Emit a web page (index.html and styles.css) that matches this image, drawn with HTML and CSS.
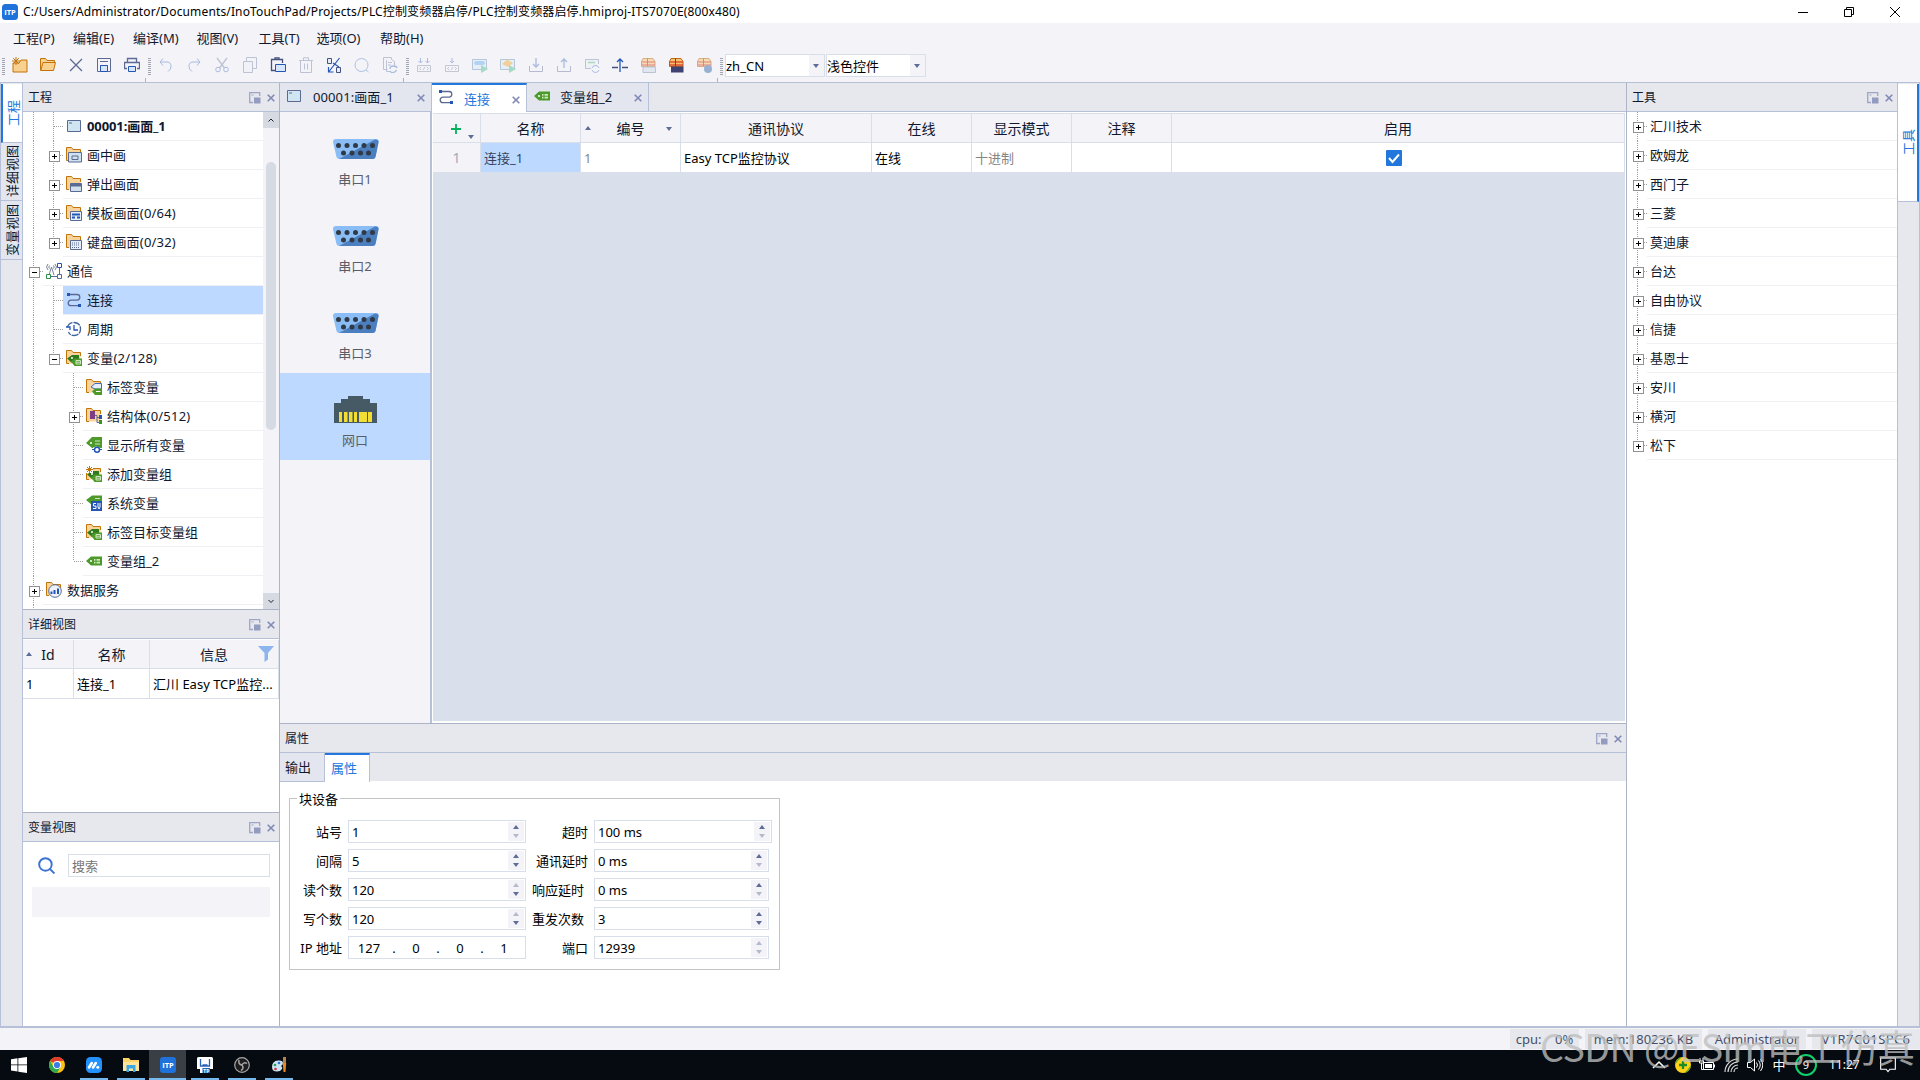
FILE: index.html
```html
<!DOCTYPE html>
<html lang="zh-CN">
<head>
  <meta charset="UTF-8">
  <title>InoTouchPad</title>
  <link rel="stylesheet" href="styles.css">
</head>

<body>
  <!-- Shared icons -->
  <svg class="defs">
    <symbol id="i-screen" viewBox="0 0 16 16"><path d="M1.5 2.5h13v11h-13z" fill="#cfe6f2" stroke="#5b6a92"/><path d="M3 5h3" stroke="#5b6a92"/></symbol>
    <symbol id="i-folder" viewBox="0 0 16 16"><path d="M.5 13.5v-13h5l1.5 2h7.500v11z" fill="#f8d39b"/><path d="M3 13.500H.5v-13h5l1.500 2h7.500V6" fill="none" stroke="#c27408"/></symbol>
    <symbol id="i-tag" viewBox="0 0 16 16"><path d="M0 8l5-4.500h11v9H5z" fill="#4d9a2a"/><path d="M8 6h6v4.500H8z" fill="#cfe8bf"/><path d="M8 8.200h6M10 6v5" stroke="#4d9a2a"/><circle cx="5" cy="8" r="1" fill="#fff"/></symbol>
    <symbol id="i-link" viewBox="0 0 16 16"><path d="M3 2.500h8a2.800 2.800 0 0 1 0 5.600H5a2.800 2.800 0 0 0 0 5.600h8" fill="none" stroke="#5b6a92" stroke-width="1.300"/><path d="M1 1h3v3H1zM12 12h3v3h-3z" fill="#2456b5"/></symbol>
    <symbol id="i-dock" viewBox="0 0 12 12"><path d="M4 10.500H.7V.7h10V4" fill="none" stroke="#8d95bb" stroke-width="1.300"/><path d="M2.500 3h2" stroke="#8d95bb"/><path d="M5 5.500h6.500v6H5z" fill="#7f88b5"/></symbol>
    <symbol id="i-x" viewBox="0 0 8 8"><path d="M.7.7l6.600 6.600M7.300.7L.7 7.300" fill="none" stroke="#8089b5" stroke-width="1.600"/></symbol>
    <symbol id="i-tags2" viewBox="0 0 16 16"><use href="#i-folder"/><path d="M1 8.500L6 5h7v5H9v3H6z" fill="#2f7a1c"/><path d="M5 11.500L8.500 8.500H16V16H8.500z" fill="#4d9a2a"/><path d="M10 10.500h4.500v3.500H10zM10 12.200h4.500" fill="none" stroke="#cfe8bf"/><circle cx="6" cy="8" r="1" fill="#fff"/></symbol>
    <symbol id="i-serial" viewBox="0 0 46 20"><path d="M3 0h40q3 0 2.500 3l-3 15q-.5 2-3 2H6.500q-2.500 0-3-2L0 3Q0 0 3 0z" fill="#8abcf5"/><path d="M42 .5q4 0 3.500 3l-3 14.500q-.5 2-3 2H6z" fill="#4c7fc0"/><g fill="#2f3a44"><circle cx="5.500" cy="6.500" r="2.500"/><circle cx="14" cy="6.500" r="2.500"/><circle cx="22.500" cy="6.500" r="2.500"/><circle cx="31" cy="6.500" r="2.500"/><circle cx="39.500" cy="6.500" r="2.500"/><circle cx="10.500" cy="14" r="2.500"/><circle cx="19" cy="14" r="2.500"/><circle cx="27.500" cy="14" r="2.500"/><circle cx="35.500" cy="14" r="2.500"/></g></symbol>
    <symbol id="i-box" viewBox="0 0 16 16"><path d="M1.500 4.500l1.500-3h10l2 3v5h-13.500z" fill="#f6c46c" stroke="#c0691a"/><path d="M1.500 5h13.500M1.500 8h13.500M7.500 1.500V9" stroke="#d11515"/></symbol>
    <symbol id="i-code" viewBox="0 0 16 16"><path d="M1.500 8.500h13v6h-13z" fill="none" stroke="#6d7890"/><path d="M5 10l-1.500 1.500L5 13M11 10l1.500 1.500L11 13M9 10l-2 3" fill="none" stroke="#6d7890"/></symbol>
  </svg>

  <div class="app">
    <header class="titlebar">
      <svg class="logo" viewBox="0 0 16 16"><rect width="16" height="16" rx="3.500" fill="#1f72da"/><text x="8" y="10.800" text-anchor="middle">ITP</text></svg>
      <span class="path">C:/Users/Administrator/Documents/InoTouchPad/Projects/PLC控制变频器启停/PLC控制变频器启停.hmiproj-ITS7070E(800x480)</span>
      <div class="windowButtons">
        <svg viewBox="0 0 12 12"><path d="M1 6.500h10"/></svg>
        <svg viewBox="0 0 12 12"><path d="M1.500 3.500h7v7h-7zM3.500 3.500v-2h7v7h-2"/></svg>
        <svg viewBox="0 0 12 12"><path d="M1 1l10 10M11 1L1 11"/></svg>
      </div>
    </header>

    <nav class="menubar">
      <span>工程(P)</span><span>编辑(E)</span><span>编译(M)</span><span>视图(V)</span><span>工具(T)</span><span>选项(O)</span><span>帮助(H)</span>
    </nav>

    <div class="toolbar">
      <i class="grip"></i>
      <div class="tools">
        <svg viewBox="0 0 16 16"><path d="M1 15V6h6l2-3h6v12z" fill="#f8d08f" stroke="#c27408"/><path d="M4 0v8M0 4h8M1.200 1.200l5.600 5.600M6.800 1.200L1.200 6.800" stroke="#c27408"/></svg>
        <svg viewBox="0 0 16 16"><path d="M.5 13.500v-12h5l1.500 2h7.500v2" fill="#f8d08f" stroke="#c27408"/><path d="M.8 13.500L3 5.500h12.500l-2 8z" fill="#f8d08f" stroke="#c27408"/></svg>
        <svg viewBox="0 0 16 16"><path d="M2 2l12 12M14 2L2 14" stroke="#5b6a92" stroke-width="1.300"/></svg>
        <svg viewBox="0 0 16 16"><path d="M1.500 1.500h13v13h-13zM4.500 14.500v-6h7v6M4 4.500h8" fill="none" stroke="#5b6a92"/><path d="M4.500 14.500v-6h7v6z" fill="#d8e6fb" stroke="#2456b5"/></svg>
        <svg viewBox="0 0 16 16"><path d="M3.500 5V1.500h9V5M3 11.500H.5v-6h15v6H13" fill="none" stroke="#5b6a92" stroke-width="1.300"/><path d="M4.500 9.500h7v5h-7z" fill="#d8e6fb" stroke="#2456b5"/></svg>
      </div>
      <i class="grip tick"></i>
      <div class="tools">
        <svg class="off" viewBox="0 0 16 16"><path d="M5 1.500L2 5l3 3.500M2 5h7q4 0 4 4.500 0 3-3 5" fill="none" stroke="#2456b5"/></svg>
        <svg class="off" viewBox="0 0 16 16"><path d="M11 1.500L14 5l-3 3.500M14 5H7Q3 5 3 9.500q0 3 3 5" fill="none" stroke="#2456b5"/></svg>
        <svg class="off" viewBox="0 0 16 16"><path d="M3 1l7.500 10M13 1L5.500 11" stroke="#5b6a92" stroke-width="1.300"/><circle cx="4" cy="12.500" r="2.300" fill="none" stroke="#2456b5"/><circle cx="12" cy="12.500" r="2.300" fill="none" stroke="#2456b5"/></svg>
        <svg class="off" viewBox="0 0 16 16"><path d="M1.500 4.500h9v11h-9z" fill="#eef2fa" stroke="#5b6a92"/><path d="M4.500 4V.5h10v11h-4" fill="none" stroke="#5b6a92"/></svg>
        <svg viewBox="0 0 16 16"><path d="M5 13.500H1.500v-11h11V6M5 3V.8h4V3" fill="none" stroke="#44527c" stroke-width="1.300"/><path d="M5.500 7.500h10v7h-10z" fill="#d8e6fb" stroke="#2456b5"/></svg>
        <svg class="off" viewBox="0 0 16 16"><path d="M2.500 3.500v12h11v-12M1 3.500h14M5.500 3V.8h5V3M6.500 6.500v6M9.500 6.500v6" fill="none" stroke="#5b6a92"/></svg>
        <svg viewBox="0 0 16 16"><path d="M1.500 1.500h4v5h-4zM10.500 10.500h4v5h-4z" fill="#e5ebf5" stroke="#44527c"/><path d="M13.500 1L3 14.500M2.500 10v5h5M7 6l6 4" fill="none" stroke="#2456b5" stroke-width="1.200"/></svg>
        <svg class="off" viewBox="0 0 16 16"><circle cx="7.500" cy="8" r="6.500" fill="none" stroke="#2f65c0"/><path d="M12 13l2.500 2" stroke="#2f65c0"/></svg>
        <svg class="off" viewBox="0 0 16 16"><path d="M1.500.5h8v2l3 2v4M1.500.5v12h4M4.500 3v11.500h4M6 5.500h4M6 8h3" fill="none" stroke="#5b6a92"/><path d="M8 12q0-3 3.500-3 3 0 3.500 2M8 14q1 2 3.500 1.500 2-.5 3-2.500" fill="none" stroke="#2456b5" stroke-width="1.300"/></svg>
      </div>
      <i class="grip tick"></i>
      <div class="tools">
        <svg class="off" viewBox="0 0 16 16"><use href="#i-code"/><path d="M4.500 1v5M11.500 1v5M2.500 4l2 2 2-2M9.500 4l2 2 2-2" fill="none" stroke="#2456b5"/></svg>
        <svg class="off" viewBox="0 0 16 16"><use href="#i-code"/><path d="M8 1v5M6 4l2 2 2-2" fill="none" stroke="#2456b5"/></svg>
        <svg class="half" viewBox="0 0 16 16"><path d="M.5 2.500h14v10H.5z" fill="#dcecf6" stroke="#7a9cc4"/><path d="M2 6q0-2 2.500-2h6Q13 4 13 6t-2.500 2h-6Q2 8 2 6z" fill="#77aef0"/><path d="M9 8l7 4-7 4z" fill="#59c290"/></svg>
        <svg class="half" viewBox="0 0 16 16"><path d="M.5 2.500h14v10H.5z" fill="#dcecf6" stroke="#7a9cc4"/><path d="M2 7l5-4.500L13 6l-5 4z" fill="#f0b13c"/><path d="M9 8l7 4-7 4z" fill="#59c290"/></svg>
        <svg class="off" viewBox="0 0 16 16"><path d="M1.500 9v5.500h13V9" fill="none" stroke="#44527c"/><path d="M8 1v9M5 7l3 3 3-3" fill="none" stroke="#2456b5" stroke-width="1.300"/></svg>
        <svg class="off" viewBox="0 0 16 16"><path d="M1.500 9v5.500h13V9" fill="none" stroke="#44527c"/><path d="M8 11V2M5 5l3-3 3 3" fill="none" stroke="#2456b5" stroke-width="1.300"/></svg>
        <svg class="off" viewBox="0 0 16 16"><path d="M7 11.500H1.500v-9h13V7" fill="#e2f2ed" stroke="#5b6a92"/><path d="M4 5.500h7" stroke="#35a56a" stroke-width="1.500"/><path d="M8 11q1-3 4-2.500 2 0 3 2.500M15 13q-1 2.500-3.500 2.500T8 13" fill="none" stroke="#2456b5"/></svg>
        <svg viewBox="0 0 16 16"><path d="M0 10.500h6M10 10.500h6" stroke="#44527c" stroke-width="1.300"/><path d="M8 15V2M5 5l3-3 3 3" fill="none" stroke="#2456b5" stroke-width="1.300"/></svg>
        <svg class="half" viewBox="0 0 16 16"><use href="#i-box"/><path d="M3 10h12.500v5.500H3z" fill="#cfdcea" stroke="#8294ad"/></svg>
        <svg viewBox="0 0 16 16"><use href="#i-box"/><path d="M3 9.500h12.500v6H3z" fill="#3f4270"/></svg>
        <svg class="half" viewBox="0 0 16 16"><use href="#i-box"/><circle cx="12" cy="12" r="4" fill="#3f6fae"/></svg>
      </div>
      <i class="grip tick"></i>
      <div class="select">zh_CN<b class="down"></b></div>
      <div class="select">浅色控件<b class="down"></b></div>
    </div>

    <main class="workspace">
      <aside class="strip">
        <div class="vtab active"><span>工程</span></div>
        <div class="vtab"><span>详细视图</span></div>
        <div class="vtab"><span>变量视图</span></div>
      </aside>

      <section class="left">
        <div class="panelHead">工程<svg class="dock"><use href="#i-dock"/></svg><svg class="x"><use href="#i-x"/></svg></div>
        <div class="treeWrap">
          <div class="tree">
            <div class="row"><i class="v"></i><i class="v h"></i><p><svg><use href="#i-screen"/></svg><strong>00001:画面_1</strong></p></div>
            <div class="row"><i class="v"></i><i class="v h plus"></i><p><svg viewBox="0 0 16 16"><use href="#i-folder"/><path d="M2.500 5.500h13v9.500h-13z" fill="#cfe0ee" stroke="#5b6a92"/><path d="M6 9h6v3.500H6z" fill="none" stroke="#5b6a92"/></svg>画中画</p></div>
            <div class="row"><i class="v"></i><i class="v h plus"></i><p><svg viewBox="0 0 16 16"><use href="#i-folder"/><path d="M4.500 7.500h11v8h-11z" fill="#cfe0ee" stroke="#5b6a92"/><path d="M4.500 9h11" stroke="#5b6a92" stroke-width="3"/></svg>弹出画面</p></div>
            <div class="row"><i class="v"></i><i class="v h plus"></i><p><svg viewBox="0 0 16 16"><use href="#i-folder"/><path d="M4.500 6.500h11v9h-11z" fill="#e5eefa" stroke="#5b6a92"/><path d="M6 9.500h8M6 12.500h3M11 12.500h3" stroke="#2456b5" stroke-width="2"/></svg><span class="wide">模板画面(0/64)</span></p></div>
            <div class="row"><i class="v"></i><i class="v h plus last"></i><p><svg viewBox="0 0 16 16"><use href="#i-folder"/><path d="M4.500 6.500h11v9h-11z" fill="#e5eefa" stroke="#5b6a92"/><path d="M6 9h8M6 11h8M6 13.500h8" stroke="#5b6a92" stroke-dasharray="1 1"/></svg><span class="wide">键盘画面(0/32)</span></p></div>
            <div class="row"><i class="v h minus"></i><p><svg viewBox="0 0 16 16"><path d="M3 12l2.500-8L8 12M2 1q-3 3 0 6M9 1q3 3 0 6M3.500 2.500q-1.500 1.500 0 3M7.500 2.500q1.500 1.500 0 3" fill="none" stroke="#78829c"/><path d="M13.500 4v8M4 13.500h8" stroke="#5b6a92"/><path d="M11.500.5h4v4h-4z" fill="#fff" stroke="#2456b5"/><path d="M.5 11.500h4v4h-4z" fill="#fff" stroke="#2f8f4e"/><path d="M11.500 11.500h4v4h-4z" fill="#fff" stroke="#5b6a92"/></svg>通信</p></div>
            <div class="row"><i class="v"></i><i class="v h"></i><p class="selected"><svg><use href="#i-link"/></svg>连接</p></div>
            <div class="row"><i class="v"></i><i class="v h"></i><p><svg viewBox="0 0 16 16"><path d="M1.500 6Q3 1.500 8 1.500 14.500 2 14.500 8T8 14.500Q4 14.500 2.500 11" fill="none" stroke="#41619f" stroke-width="1.300" stroke-dasharray="7 1"/><path d="M0 6h4v3M8 4v5h4" fill="none" stroke="#2456b5" stroke-width="1.300"/></svg>周期</p></div>
            <div class="row"><i class="v"></i><i class="v h minus last"></i><p><svg><use href="#i-tags2"/></svg><span class="wide">变量(2/128)</span></p></div>
            <div class="row"><i class="v"></i><i></i><i class="v h"></i><p><svg viewBox="0 0 16 16"><use href="#i-folder"/><path d="M5 8l4-3.500h6.500V10H9z" fill="#e5eefa" stroke="#3d6cc4"/><path d="M6 12.500L9 9.500h7V16H9z" fill="#4d9a2a"/><path d="M10 12.500h4.500" stroke="#fff"/></svg>标签变量</p></div>
            <div class="row"><i class="v"></i><i></i><i class="v h plus"></i><p><svg viewBox="0 0 16 16"><use href="#i-folder"/><path d="M4 3h5v8H4z" fill="#7b3f86"/><path d="M9 7.500h2v7h2M11 9.500h2" fill="none" stroke="#5b6a92"/><path d="M13 7h3v4h-3z" fill="#2456b5"/><path d="M13 12h3v4h-3z" fill="#3c9420"/></svg><span class="wide">结构体(0/512)</span></p></div>
            <div class="row"><i class="v"></i><i></i><i class="v h"></i><p><svg viewBox="0 0 16 16"><path d="M0 6l6-6h10v11H6z" fill="#4d9a2a"/><path d="M9 4h5M9 7h5" stroke="#cfe8bf"/><circle cx="5" cy="6" r="1" fill="#fff"/><path d="M5 13q5-6 11 0-5 5-11 0z" fill="#fff" stroke="#fff"/><circle cx="11" cy="12.700" r="2.500" fill="#fff" stroke="#2456b5" stroke-width="1.500"/><path d="M6 12.500h2M14 12.500h2" stroke="#2456b5"/></svg>显示所有变量</p></div>
            <div class="row"><i class="v"></i><i></i><i class="v h"></i><p><svg viewBox="0 0 16 16"><use href="#i-tags2"/><path d="M0 0h7v7H0z" fill="#fff"/><path d="M3.500 0v7M0 3.500h7M1 1l5 5M6 1L1 6" stroke="#c27408"/></svg>添加变量组</p></div>
            <div class="row"><i class="v"></i><i></i><i class="v h"></i><p><svg viewBox="0 0 16 16"><path d="M0 5l6-4.500h10V10H6z" fill="#4d9a2a"/><path d="M9 3.500h5" stroke="#cfe8bf"/><path d="M5 6h11v10H5z" fill="#2456b5"/><path d="M10 8.500H7.500V11H10v2.500H7M12 8v4l1 2 1-2V8" fill="none" stroke="#fff"/></svg>系统变量</p></div>
            <div class="row"><i class="v"></i><i></i><i class="v h"></i><p><svg><use href="#i-tags2"/></svg>标签目标变量组</p></div>
            <div class="row"><i class="v"></i><i></i><i class="v h last"></i><p><svg><use href="#i-tag"/></svg>变量组_2</p></div>
            <div class="row"><i class="v h plus"></i><p><svg viewBox="0 0 16 16"><use href="#i-folder"/><circle cx="9" cy="9" r="6.300" fill="#eef3fb" stroke="#5b6a92"/><path d="M5.500 12v-2.500M8.500 12V8M12 12V6.500" stroke="#2456b5" stroke-width="2"/></svg>数据服务</p></div>
            <div class="row rest"><i class="v"></i></div>
          </div>
          <div class="scroll"><b><svg viewBox="0 0 8 8"><path d="M1.500 5.500L4 3l2.500 2.500"/></svg></b><i></i><b><svg viewBox="0 0 8 8"><path d="M1.500 3L4 5.500 6.500 3"/></svg></b></div>
        </div>

        <div class="panelHead top">详细视图<svg class="dock"><use href="#i-dock"/></svg><svg class="x"><use href="#i-x"/></svg></div>
        <div class="detail">
          <div class="dgrid dhead"><span><b class="up"></b>Id</span><span>名称</span><span>信息<svg class="funnel" viewBox="0 0 16 16"><path d="M0 0h16l-6 7v6.500L6.500 16V7z" fill="#8db4ec"/></svg></span></div>
          <div class="dgrid"><span>1</span><span>连接_1</span><span>汇川 Easy TCP监控...</span></div>
        </div>

        <div class="panelHead top">变量视图<svg class="dock"><use href="#i-dock"/></svg><svg class="x"><use href="#i-x"/></svg></div>
        <div class="varView">
          <div class="search"><svg viewBox="0 0 16 16"><circle cx="7" cy="7" r="5.900"/><path d="M11.300 11.300L15.500 15.500"/></svg><div class="input">搜索</div></div>
          <div class="bar"></div>
        </div>
      </section>

      <section class="center">
        <div class="tabs">
          <div class="tab t1"><svg class="ti"><use href="#i-screen"/></svg>00001:画面_1<svg class="x"><use href="#i-x"/></svg></div>
          <div class="tab t2 active"><svg class="ti"><use href="#i-link"/></svg>连接<svg class="x"><use href="#i-x"/></svg></div>
          <div class="tab t3"><svg class="ti"><use href="#i-tag"/></svg>变量组_2<svg class="x"><use href="#i-x"/></svg></div>
        </div>
        <div class="editor">
          <div class="ports">
            <div class="port"><svg class="serial"><use href="#i-serial"/></svg>串口1</div>
            <div class="port"><svg class="serial"><use href="#i-serial"/></svg>串口2</div>
            <div class="port"><svg class="serial"><use href="#i-serial"/></svg>串口3</div>
            <div class="port selected"><svg class="lan" viewBox="0 0 43 27"><path d="M0 27V7h7V3h7V0h15v3h7v4h7v20z" fill="#455a64"/><path d="M5 16h3v10H5zM10 16h3.500v10H10zM15 16h3.500v10H15zM20 16h3v10h-3zM25 16h8v10h-8zM34 16h4v10h-4z" fill="#f2dd33"/></svg>网口</div>
          </div>
          <div class="sheet">
            <div class="grid head">
              <span><svg class="add" viewBox="0 0 10 10"><path d="M5 0v10M0 5h10"/></svg><b class="down"></b></span>
              <span>名称</span><span><b class="up"></b>编号<b class="down"></b></span><span>通讯协议</span><span>在线</span><span>显示模式</span><span>注释</span><span>启用</span>
            </div>
            <div class="grid body">
              <span class="no">1</span><span class="sel">连接_1</span><span class="mute">1</span><span>Easy TCP监控协议</span><span>在线</span><span class="mute">十进制</span><span></span>
              <span class="check"><svg viewBox="0 0 16 16"><rect width="16" height="16" rx="1" fill="#2277dc"/><path d="M3 8l3.500 4L13 4.500" fill="none" stroke="#fff" stroke-width="2"/></svg></span>
            </div>
          </div>
        </div>

        <div class="panelHead top">属性<svg class="dock"><use href="#i-dock"/></svg><svg class="x"><use href="#i-x"/></svg></div>
        <div class="subtabs"><span>输出</span><span class="active">属性</span></div>
        <div class="props">
          <div class="group">
            <span class="legend">块设备</span>
            <div class="line"><label>站号</label><div class="field">1<em><b class="up"></b><b class="down dim"></b></em></div><label>超时</label><div class="field wide">100 ms<em><b class="up"></b><b class="down dim"></b></em></div></div>
            <div class="line"><label>间隔</label><div class="field">5<em><b class="up"></b><b class="down"></b></em></div><label>通讯延时</label><div class="field">0 ms<em><b class="up"></b><b class="down dim"></b></em></div></div>
            <div class="line"><label>读个数</label><div class="field">120<em><b class="up dim"></b><b class="down"></b></em></div><label class="in">响应延时</label><div class="field">0 ms<em><b class="up"></b><b class="down dim"></b></em></div></div>
            <div class="line"><label>写个数</label><div class="field">120<em><b class="up dim"></b><b class="down"></b></em></div><label class="in">重发次数</label><div class="field">3<em><b class="up"></b><b class="down"></b></em></div></div>
            <div class="line"><label>IP 地址</label><div class="field ip"><s>127</s><s>.</s><s>0</s><s>.</s><s>0</s><s>.</s><s>1</s></div><label>端口</label><div class="field">12939<em><b class="up dim"></b><b class="down dim"></b></em></div></div>
          </div>
        </div>
      </section>

      <section class="right">
        <div class="panelHead">工具<svg class="dock"><use href="#i-dock"/></svg><svg class="x"><use href="#i-x"/></svg></div>
        <div class="tree">
          <div class="row"><i class="v h plus"></i><p>汇川技术</p></div>
          <div class="row"><i class="v h plus"></i><p>欧姆龙</p></div>
          <div class="row"><i class="v h plus"></i><p>西门子</p></div>
          <div class="row"><i class="v h plus"></i><p>三菱</p></div>
          <div class="row"><i class="v h plus"></i><p>莫迪康</p></div>
          <div class="row"><i class="v h plus"></i><p>台达</p></div>
          <div class="row"><i class="v h plus"></i><p>自由协议</p></div>
          <div class="row"><i class="v h plus"></i><p>信捷</p></div>
          <div class="row"><i class="v h plus"></i><p>基恩士</p></div>
          <div class="row"><i class="v h plus"></i><p>安川</p></div>
          <div class="row"><i class="v h plus"></i><p>横河</p></div>
          <div class="row"><i class="v h plus last"></i><p>松下</p></div>
        </div>
      </section>

      <aside class="strip rightStrip">
        <div class="vtab active"><span>工具</span></div>
      </aside>
    </main>

    <div class="status"><span class="cpu">cpu:&nbsp; &nbsp; 0%</span><span class="mem">mem:180236 KB</span><span class="user">Administrator</span><span class="ver">V1R7C01SPC6</span></div>

    <footer class="taskbar">
      <div class="task"><svg viewBox="0 0 16 16"><path d="M0 2.300l6.500-1v6.200H0zM7.300 1.200L16 0v7.500H7.300zM0 8.300h6.500v6.200L0 13.600zM7.300 8.300H16V16l-8.700-1.200z" fill="#fff"/></svg></div>
      <div class="task"><svg viewBox="0 0 16 16"><circle cx="8" cy="8" r="8" fill="#fbc116"/><path d="M8 8L1.100 4A8 8 0 0 1 15 4H8z" fill="#e33b2e"/><path d="M1.100 4A8 8 0 0 0 8 16l3.500-6L8 8 4.500 10z" fill="#2da94f"/><circle cx="8" cy="8" r="4" fill="#fff"/><circle cx="8" cy="8" r="3.100" fill="#3a7ce8"/></svg></div>
      <div class="task open"><svg viewBox="0 0 16 16"><rect width="16" height="16" rx="4.500" fill="#2392ff"/><path d="M3 10.500L5.800 6M7 10.500L9.800 6" fill="none" stroke="#fff" stroke-width="2.600" stroke-linecap="round"/><circle cx="11.800" cy="10.300" r="1.500" fill="#fff"/></svg></div>
      <div class="task open"><svg viewBox="0 0 16 16"><path d="M0 1h6l1.500 2H16v11H0z" fill="#fbd568"/><path d="M0 5h16v9H0z" fill="#fde49a"/><path d="M3.500 15V8h9v7H10v-3.500H6V15z" fill="#39a6e6"/></svg></div>
      <div class="task open current"><svg class="logo" viewBox="0 0 16 16"><rect width="16" height="16" rx="3" fill="#1f72da"/><text x="8" y="10.800" text-anchor="middle">ITP</text></svg></div>
      <div class="task open"><svg class="logo tp" viewBox="0 0 16 16"><path d="M1.500 0h13q1.500 0 1.500 1.500V12h-3v4H3v-4H0V1.500Q0 0 1.500 0z" fill="#fff"/><path d="M3.500 2v7h9V2M5.500 8h5" fill="none" stroke="#2a62b4" stroke-width="1.300"/><path d="M5.500 11H13v5H5.500z" fill="#1d61b9"/><text x="9.300" y="15.500" text-anchor="middle">TP</text></svg></div>
      <div class="task open"><svg viewBox="0 0 16 16"><circle cx="8" cy="8" r="7.300" fill="#1d1d20" stroke="#a8a8a8" stroke-width="1.200"/><path d="M8 8Q4 7.500 5 3M8 8q2-3.500 5-1.500M8 8q2.500 3.500-1 5.500" fill="none" stroke="#a8a8a8" stroke-width="1.500"/></svg></div>
      <div class="task open"><svg viewBox="0 0 16 16"><path d="M1 10q0-6 6-6.500 5-.5 5 2.500 0 2-2 3 2 1 1 3-1.500 2.500-5 2.500Q1 14.500 1 10z" fill="#c9e4f2"/><circle cx="4" cy="8" r="1.300" fill="#2e9e4b"/><circle cx="8" cy="6" r="1.300" fill="#3273d6"/><circle cx="4.500" cy="12" r="1.300" fill="#d33"/><path d="M12 0h3v6h-3z" fill="#b9824b"/><path d="M11.800 6h3.400l-.7 9h-2z" fill="#ee8a1d"/></svg></div>
      <div class="tray">
        <svg viewBox="0 0 16 16"><path d="M2 11l6-6 6 6" fill="none" stroke="#fff" stroke-width="1.500"/></svg>
        <svg viewBox="0 0 16 16"><circle cx="8" cy="8" r="8" fill="#fdd116"/><path d="M0 8a8 8 0 0 1 7-8Q3 3 0 8zM16 8a8 8 0 0 1-7 8q4-3 7-8z" fill="#5aa52c"/><path d="M8 4v8M4 8h8" stroke="#1c8c28" stroke-width="2.300"/></svg>
        <svg viewBox="0 0 16 16"><path d="M4.500 5.500h10v7h-10zM15.500 7.500v3M1 1v3M4 1v3M.5 4h4v2h-4zM2.500 6v6.500h2" fill="none" stroke="#fff"/><path d="M6 7h7v4H6z" fill="#fff"/></svg>
        <svg viewBox="0 0 16 16"><path d="M2 15A13 13 0 0 1 15 2M5 15A10 10 0 0 1 15 5M8 15a7 7 0 0 1 7-7M11 15a4 4 0 0 1 4-4" fill="none" stroke="#d8d8d8" stroke-width="1.200"/></svg>
        <svg viewBox="0 0 16 16"><path d="M.5 5.500h3l4-3.500v12l-4-3.500h-3zM9.500 5.500q2 2.500 0 5M11.500 3.500q3.500 4.500 0 9M13.500 2q4.500 6 0 12" fill="none" stroke="#fff"/></svg>
        <span class="ime">中</span>
        <span class="nine">9</span>
        <span class="clock">11:27</span>
        <svg class="note" viewBox="0 0 17 17"><path d="M.7 1h15.600v12H10.500l-2 2.500-2-2.500H.7z" fill="none" stroke="#fff" stroke-width="1.200"/></svg>
      </div>
    </footer>
  </div>

  <div class="watermark">CSDN @ESim电工仿真</div>
</body>
</html>
```

FILE: styles.css
```css
* { box-sizing: border-box; margin: 0; padding: 0; }
html, body {
  width: 1920px;
  height: 1080px;
  overflow: hidden;
  font-family: "Noto Sans", "Noto Sans CJK SC", sans-serif;
  font-size: 13px;
  line-height: 18px;
  color: #10182e;
}
i, em { font-style: normal; }
s { text-decoration: none; }
svg { display: block; flex: none; }
.defs { position: absolute; width: 0; height: 0; }

.app {
  display: flex;
  flex-direction: column;
  width: 1920px;
  height: 1080px;
  background: #f3f3f8;
  white-space: nowrap;
}

/* Title bar and menu */
.titlebar {
  display: flex;
  align-items: center;
  height: 23px;
  padding-left: 2px;
  background: #fff;
  color: #000;
  font-size: 12px;
}
.logo { width: 16px; height: 16px; }
.logo text { font: bold 7.5px "Open Sans", sans-serif; fill: #fff; }
.logo.tp text { font-size: 5px; }
.path { margin-left: 5px; letter-spacing: 0.14px; }
.windowButtons { display: flex; gap: 34px; margin-left: auto; padding-right: 19px; }
.windowButtons svg { width: 12px; height: 12px; fill: none; stroke: #000; }

.menubar { display: flex; align-items: center; height: 31px; padding: 0 0 2px 13px; }
.menubar span { width: 60px; }
.menubar span:nth-child(3), .menubar span:nth-child(6) { width: 63.500px; }
.menubar span:nth-child(4) { width: 62px; }
.menubar span:nth-child(5) { width: 58px; }

/* Toolbar */
.toolbar { display: flex; height: 28px; padding-left: 2px; }
.tools { display: flex; gap: 12px; margin: 3px 8px 0 7px; }
.tools svg { width: 16px; height: 16px; }
.off { opacity: 0.35; }
.half { opacity: 0.5; }
.grip {
  position: relative;
  width: 3px;
  height: 18px;
  margin-top: 4px;
  background: repeating-linear-gradient(#a2a6b2 0 1px, transparent 1px 2px);
}
.tick::after {
  content: "";
  position: absolute;
  left: -3px;
  top: 20px;
  width: 1px;
  height: 4px;
  background: #aeb2bf;
}
.select {
  display: flex;
  align-items: center;
  justify-content: space-between;
  width: 100px;
  height: 23px;
  margin-left: 1px;
  border: 1px solid #d9dfea;
  background: linear-gradient(90deg, #fff 83px, #f3f3f8 83px);
  color: #000;
}
.grip + .select { margin-left: 2px; }
.select .down { margin-right: 5px; }

.up, .down {
  flex: none;
  width: 0;
  height: 0;
  border: 3px solid transparent;
  border-top: 4px solid #5f6c97;
  border-bottom: 0;
}
.up { border-top: 0; border-bottom: 4px solid #5f6c97; }
.up.dim { border-bottom-color: #b4b9cb; }
.down.dim { border-top-color: #b4b9cb; }

/* Docking area */
.workspace {
  display: flex;
  height: 944px;
  border-top: 1px solid #b6c0d6;
  background: #e7e8ee;
}
.strip { flex: none; width: 23px; padding-top: 1px; border: solid #b6c0d6; border-width: 0 1px; font-size: 13px; }
.vtab {
  display: flex;
  align-items: center;
  justify-content: center;
  height: 58.500px;
  border-bottom: 1px solid #b6c0d6;
  background: #e3e6ef;
}
.vtab span { writing-mode: vertical-rl; text-orientation: sideways; transform: rotate(180deg); }
.vtab.active { border-left: 2px solid #2277dc; background: #fff; color: #2277dc; }
.rightStrip .vtab { height: 118px; border-left: 0; border-right: 2px solid #2277dc; }

.panelHead {
  display: flex;
  flex: none;
  align-items: center;
  height: 29px;
  padding: 1px 4px 0 5px;
  border-bottom: 1px solid #b6c0d6;
  background: #e7e8ee;
  font-size: 12px;
}
.panelHead.top { height: 30px; border-top: 1px solid #adb4c8; }
.dock { width: 12px; height: 12px; margin-left: auto; opacity: 0.8; }
.x { width: 8px; height: 8px; margin-left: 6px; }

.left { display: flex; flex: none; flex-direction: column; width: 257px; border-right: 1px solid #adb4c8; background: #fff; }
.treeWrap { display: flex; height: 497px; overflow: hidden; }
.treeWrap .tree { width: 240px; }
.row { display: flex; height: 29px; }
.row.rest { height: 4px; }
.row i { position: relative; flex: none; width: 20px; }
.row p {
  display: flex;
  flex: 1;
  align-items: center;
  padding-left: 3px;
  border-bottom: 1px solid #eff0f4;
}
.row p svg { width: 16px; height: 16px; margin-right: 5px; }
.row .selected { background: #bdd9ff; }
.row strong { font-weight: 700; letter-spacing: -0.1px; }
.row .wide { letter-spacing: 0.2px; }

/* dotted guide lines and expanders */
.v { background: repeating-linear-gradient(#a0a0a0 0 1px, transparent 1px 2px) 10px 0 / 1px 100% no-repeat; }
.v.last { background-size: 1px 14px; }
.h::before { content: ""; position: absolute; left: 11px; top: 14px; width: 9px; border-top: 1px dotted #a0a0a0; }
.plus::after, .minus::after {
  content: "";
  position: absolute;
  left: 6px;
  top: 10px;
  width: 9px;
  height: 9px;
  border: 1px solid #919191;
  background: linear-gradient(#000, #000) center / 5px 1px no-repeat, linear-gradient(#000, #000) center / 1px 5px no-repeat, #fff;
}
.minus::after { background: linear-gradient(#000, #000) center / 5px 1px no-repeat, #fff; }

.scroll { display: flex; flex-direction: column; align-items: center; width: 16px; background: #f3f3f8; }
.scroll b { width: 16px; height: 16px; padding: 4px; background: #d6dae3; }
.scroll b:last-child { margin-top: auto; }
.scroll svg { width: 8px; height: 8px; fill: none; stroke: #222; }
.scroll i { width: 10px; height: 268px; margin-top: 34px; border-radius: 5px; background: #d6dae3; }

.detail { height: 173px; padding-top: 1px; }
.dgrid { display: grid; grid-template-columns: 51px 76px 129px; height: 30px; border-bottom: 1px solid #d9dfea; color: #000; }
.dgrid span { display: flex; align-items: center; padding-left: 3px; border-right: 1px solid #d9dfea; }
.dhead { height: 29px; background: #f3f3f8; font-size: 14px; color: #10182e; }
.dhead span { position: relative; justify-content: center; padding: 1px 0 0; }
.dhead .up { position: absolute; left: 3px; top: 12px; }
.funnel { position: absolute; right: 4px; top: 6px; width: 16px; height: 16px; }

.varView { padding: 12px 9px; }
.search { display: flex; align-items: center; padding-left: 6px; }
.search svg { width: 17px; height: 17px; margin-right: 13px; fill: none; stroke: #3c73d2; stroke-width: 1.800; }
.search .input { flex: 1; height: 23px; padding: 2px 3px; border: 1px solid #d9dfea; color: #767676; }
.bar { height: 30px; margin-top: 10px; background: #f3f3f8; }

/* Editor */
.center { display: flex; flex: none; flex-direction: column; width: 1347px; border-right: 1px solid #adb4c8; }
.tabs { display: flex; flex: none; height: 29px; border-bottom: 1px solid #b6c0d6; }
.tab {
  display: flex;
  align-items: center;
  height: 28px;
  padding: 0 6px 0 7px;
  border-right: 1px solid #b6c0d6;
  background: #e3e6ef;
}
.tab .x { margin: 2px 0 0 auto; }
.ti { width: 16px; height: 16px; margin-top: -3px; }
.t1 { width: 152px; padding-left: 6px; letter-spacing: 0.1px; }
.t1 .ti { margin-right: 11px; }
.t2 { width: 95px; }
.t2 .ti { margin-right: 10px; }
.t3 { width: 122px; }
.t3 .ti { margin-right: 10px; }
.tab.active { height: 29px; padding-left: 6px; border-top: 2px solid #2277dc; background: #fff; color: #2277dc; }

.editor { display: flex; height: 611px; }
.ports { width: 152px; border-right: 2px solid #b6c0d6; background: #f3f3f8; }
.port { display: flex; flex-direction: column; align-items: center; height: 87px; color: #5a5d66; }
.port.selected { background: #bdd9ff; }
.serial { width: 46px; height: 20px; margin: 27px 0 11px 2px; }
.lan { width: 43px; height: 27px; margin: 23px 0 8px; }
.sheet { flex: 1; padding: 1px 1px 2px; background: #fff; }
.sheet::after { content: ""; display: block; height: 549px; background: #d9dfeb; }
.grid { display: grid; grid-template-columns: 48px 100px 100px 191px 100px 100px 100px 453px; height: 29px; }
.grid span { display: flex; align-items: center; border-right: 1px solid #d9dfea; }
.head { height: 30px; border: solid #d9dfea; border-width: 1px 0; background: #f3f3f8; font-size: 14px; }
.head span { position: relative; justify-content: center; padding-top: 1px; }
.head .up { position: absolute; left: 4px; top: 12px; }
.head .down { position: absolute; right: 8px; top: 13px; }
.head span:first-child .down { top: 21px; right: 6px; }
.add { width: 10px; height: 10px; margin-left: -1px; stroke: #06b25b; stroke-width: 1.800; }
.body { background: #fff; color: #000; }
.body span { padding-left: 3px; }
.body .no { justify-content: center; padding: 0; background: #f3f3f8; color: #a2a8b8; font-size: 14px; }
.body .sel { background: #bdd9ff; color: #33435f; }
.body .mute { color: #868686; }
.body .check { justify-content: center; padding: 0 8px 0 0; }
.check svg { width: 16px; height: 16px; }

/* Properties */
.subtabs { display: flex; flex: none; height: 29px; background: linear-gradient(#e7e8ee 28px, #fff 28px); }
.subtabs span { width: 45px; height: 29px; padding: 5px 0 0 5px; border: solid #b6c0d6; border-width: 0 1px 1px 0; background: #e3e6ef; }
.subtabs .active { border-top: 2px solid #2277dc; border-bottom: 0; background: #fff; color: #2277dc; padding: 4px 0 0 6px; }
.props { flex: 1; padding: 16px 9px; background: #fff; color: #000; }
.group { position: relative; width: 491px; height: 172px; padding-top: 21px; border: 1px solid #c3c4c8; }
.legend { position: absolute; left: 7px; top: -9px; padding: 0 2px; background: #fff; }
.line { display: flex; align-items: center; height: 23px; margin-bottom: 6px; }
.line label { width: 52px; text-align: right; }
.line .field + label { width: 62px; }
.line label.in { padding-right: 4px; }
.field { display: flex; align-items: center; width: 178px; height: 23px; margin-left: 6px; padding-left: 3px; border: 1px solid #d9dfea; }
.field + label + .field { width: 175px; }
.field + label + .wide { width: 178px; }
.field em {
  display: flex;
  flex-direction: column;
  align-items: center;
  justify-content: space-between;
  width: 16px;
  height: 19px;
  margin-left: auto;
  margin-right: 1px;
  padding: 3px 0;
  background: #f3f3f8;
}
.ip { padding-left: 6px; }
.ip s { width: 22px; text-align: center; }
.ip s:first-child { width: 28px; }

.right { flex: none; width: 270px; background: #fff; }

/* Status bar */
.status {
  display: flex;
  justify-content: flex-end;
  gap: 6px;
  height: 24px;
  padding-top: 1px;
  border-top: 2px solid #b6c0d6;
  background: #f3f3f8;
  color: #454f68;
}
.status span { height: 20px; background: #e7e8ee; text-align: center; line-height: 20px; }
.cpu { width: 69px; }
.mem { width: 117px; }
.user { width: 98px; }
.ver { width: 108px; letter-spacing: 0.4px; }

/* Taskbar */
.taskbar { display: flex; height: 30px; background: #060b12; color: #fff; }
.task { display: flex; align-items: center; justify-content: center; width: 37px; height: 30px; background: linear-gradient(#76b9ed, #76b9ed) center bottom / 0 2px no-repeat; }
.task:first-child { width: 38px; }
.task svg { width: 16px; height: 16px; }
.task.open { background-size: 28px 2px; }
.task.current { background-color: #3a3e45; background-size: 37px 2px; }
.tray { display: flex; align-items: center; margin-left: auto; padding-right: 24px; }
.tray svg { width: 16px; height: 16px; margin-right: 8px; }
.ime { width: 16px; text-align: center; }
.nine { width: 22px; height: 22px; margin-left: 8px; border: 2px solid #0fd169; border-radius: 50%; text-align: center; font-size: 11px; }
.clock { width: 31px; margin: 0 20px 0 12px; font-size: 12px; }
.tray .note { margin: 0; }

.watermark {
  position: absolute;
  left: 1540px;
  top: 1021px;
  font: 37.500px/50px "Noto Sans CJK SC", sans-serif;
  letter-spacing: -0.5px;
  color: rgba(190, 190, 190, 0.8);
  white-space: nowrap;
}
```
